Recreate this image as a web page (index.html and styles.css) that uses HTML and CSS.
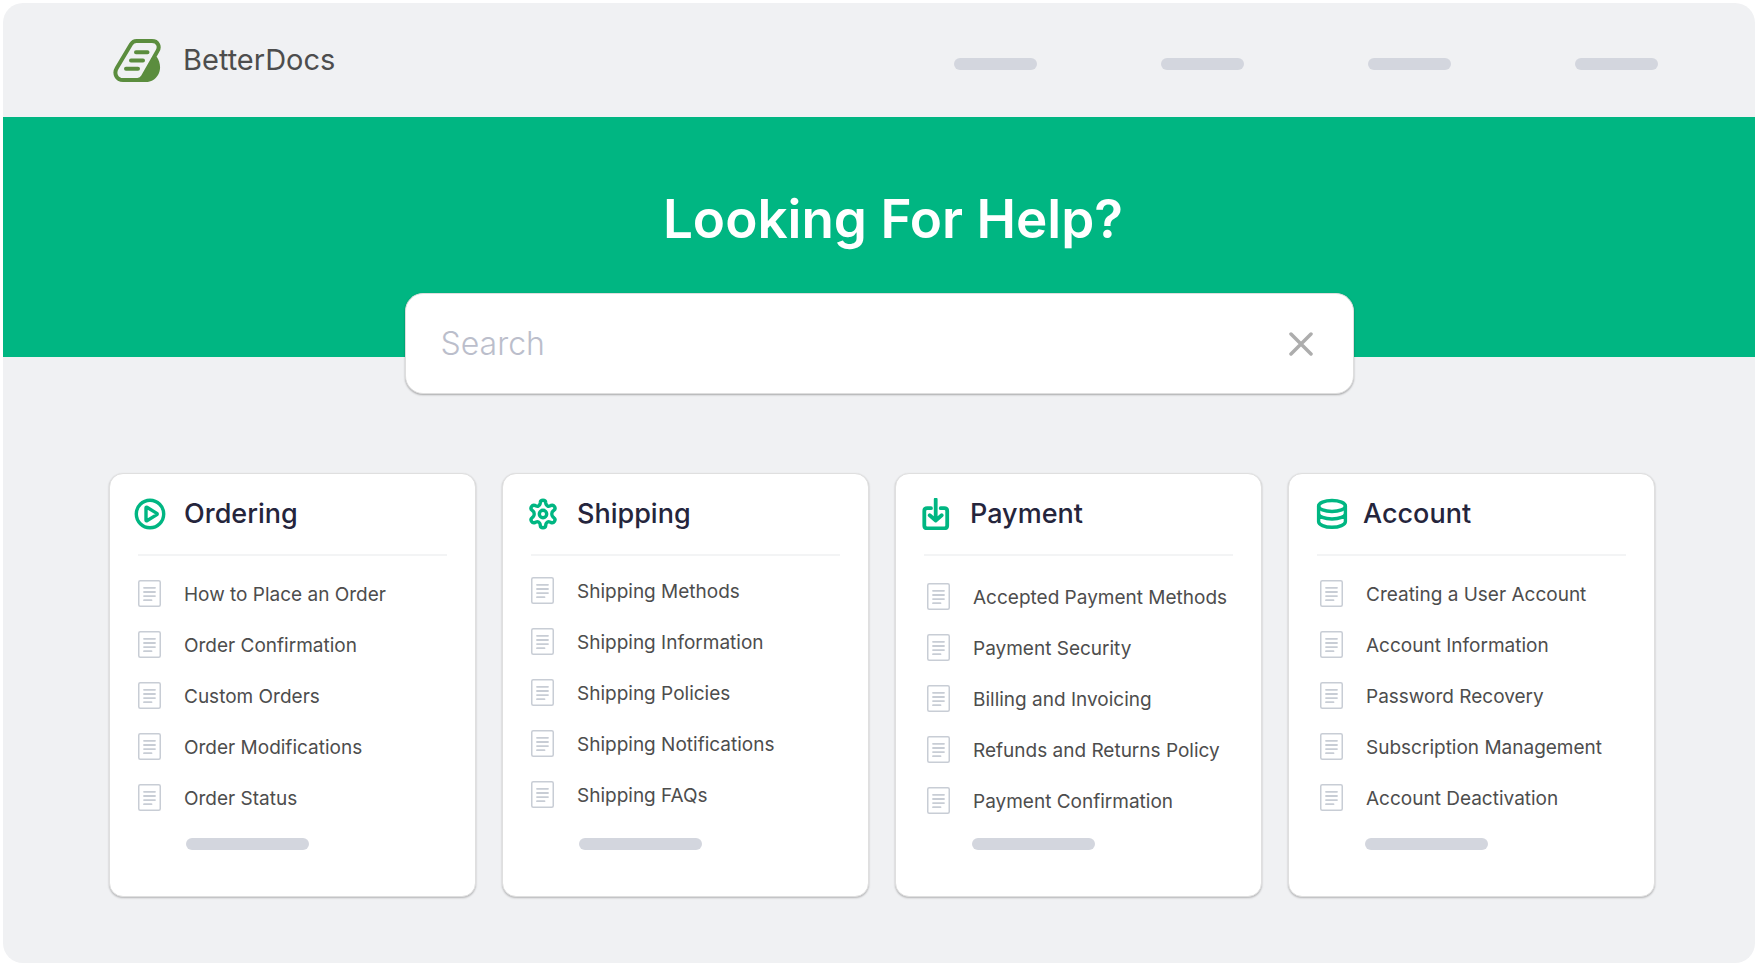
FILE: index.html
```html
<!DOCTYPE html>
<html lang="en">
<head>
<meta charset="utf-8">
<meta name="viewport" content="width=device-width, initial-scale=1">
<title>BetterDocs</title>
<link rel="stylesheet" href="styles.css">
</head>
<body>
<svg class="sprite" aria-hidden="true">
  <symbol id="doc" viewBox="0 0 23 27">
    <rect x=".75" y=".75" width="21.5" height="25.5" rx="1.5" fill="none" stroke="#c8cdd5" stroke-width="1.5"/>
    <path d="M6 7.8h11M6 12h11M6 16.1h11M6 20.2h7.5" fill="none" stroke="#c8cdd5" stroke-width="1.8" stroke-linecap="round"/>
  </symbol>
</svg>
<div class="page">
  <header class="header">
    <a class="brand" href="#">
      <svg class="brand-logo" viewBox="0 0 48 43" aria-hidden="true">
        <path d="M23.5 2H39c6 0 8.200 5.500 5.500 10L30 37.500c-1.200 2.200-2.800 3.500-5.500 3.500H10C3.500 41 .5 34.500 3.800 29L18 5.300C19.300 3.200 21 2 23.500 2Z" fill="none" stroke="#5b8d3e" stroke-width="4"/>
        <path d="M43.500 17.500c4.200 5.800 4.700 13 1.500 18.500-2.700 4.600-7 7-12 7H22c4 0 5.500-2.500 6.500-4.200Z" fill="#5b8d3e"/>
        <path d="M23 13.300h11.500M18 21.500h12M13 29.700h12" fill="none" stroke="#5b8d3e" stroke-width="4" stroke-linecap="round"/>
      </svg>
      <span>BetterDocs</span>
    </a>
    <nav class="nav" aria-label="Main">
      <a class="bar nav-bar" href="#" aria-label="Menu 1"></a>
      <a class="bar nav-bar" href="#" aria-label="Menu 2"></a>
      <a class="bar nav-bar" href="#" aria-label="Menu 3"></a>
      <a class="bar nav-bar" href="#" aria-label="Menu 4"></a>
    </nav>
  </header>

  <section class="banner">
    <h1 class="banner-title">Looking For Help?</h1>
    <form class="search" role="search">
      <input class="search-input" type="text" placeholder="Search" aria-label="Search">
      <button class="search-clear" type="button" aria-label="Clear">
        <svg width="24" height="24" viewBox="0 0 24 24" aria-hidden="true"><path d="M2 2l20 20M22 2L2 22" stroke="#adadad" stroke-width="3.500" stroke-linecap="round"/></svg>
      </button>
    </form>
  </section>

  <main class="cards">
    <section class="card">
      <h2 class="card-title">
        <svg class="card-icon" viewBox="0 0 32 32" aria-hidden="true"><circle cx="16" cy="16" r="13.700"/><path d="M12 9.800v12.400a.6.6 0 0 0 .9.500l10-6.100a.7.7 0 0 0 0-1.200l-10-6.100a.6.6 0 0 0-.9.500Z"/></svg>
        <span>Ordering</span>
      </h2>
      <ul class="list">
        <li><a class="item" href="#"><svg class="doc"><use href="#doc"/></svg>How to Place an Order</a></li>
        <li><a class="item" href="#"><svg class="doc"><use href="#doc"/></svg>Order Confirmation</a></li>
        <li><a class="item" href="#"><svg class="doc"><use href="#doc"/></svg>Custom Orders</a></li>
        <li><a class="item" href="#"><svg class="doc"><use href="#doc"/></svg>Order Modifications</a></li>
        <li><a class="item" href="#"><svg class="doc"><use href="#doc"/></svg>Order Status</a></li>
      </ul>
      <div class="bar more-bar"></div>
    </section>

    <section class="card">
      <h2 class="card-title">
        <svg class="card-icon" viewBox="0 0 32 32" aria-hidden="true"><circle cx="16" cy="16" r="3.700"/><path d="M13.300 4.500q.2-2.200 2.700-2.200t2.700 2.200l.2 1.400q.3 1.300 1.500 2 1.200.6 2.500.1l1.300-.6q2-.8 3.300 1.300t-.5 3.500l-1.100.9q-1.100.9-1.100 2.900t1.100 2.900l1.100.9q1.800 1.400.5 3.500t-3.300 1.300l-1.300-.6q-1.300-.5-2.500.1-1.200.7-1.500 2l-.2 1.400q-.2 2.200-2.700 2.200t-2.700-2.200l-.2-1.400q-.3-1.300-1.500-2-1.200-.6-2.500-.1l-1.300.6q-2 .8-3.300-1.300t.5-3.500l1.100-.9q1.100-.9 1.100-2.900t-1.100-2.900l-1.100-.9q-1.800-1.400-.5-3.500t3.300-1.300l1.300.6q1.300.5 2.500-.1 1.200-.7 1.500-2Z"/></svg>
        <span>Shipping</span>
      </h2>
      <ul class="list list-high">
        <li><a class="item" href="#"><svg class="doc"><use href="#doc"/></svg>Shipping Methods</a></li>
        <li><a class="item" href="#"><svg class="doc"><use href="#doc"/></svg>Shipping Information</a></li>
        <li><a class="item" href="#"><svg class="doc"><use href="#doc"/></svg>Shipping Policies</a></li>
        <li><a class="item" href="#"><svg class="doc"><use href="#doc"/></svg>Shipping Notifications</a></li>
        <li><a class="item" href="#"><svg class="doc"><use href="#doc"/></svg>Shipping FAQs</a></li>
      </ul>
      <div class="bar more-bar"></div>
    </section>

    <section class="card">
      <h2 class="card-title">
        <svg class="card-icon" viewBox="0 0 32 32" aria-hidden="true"><g stroke-width="3.800"><path d="M11 10.200H7.200Q4.300 10.200 4.300 13v14.500q0 2.800 2.900 2.800h17.100q2.900 0 2.900-2.800V13q0-2.800-2.900-2.800h-3.600"/><path d="M15.700 1.500v21M9.700 17.300l6 5.200 6-5.200"/></g></svg>
        <span>Payment</span>
      </h2>
      <ul class="list list-low list-inset">
        <li><a class="item" href="#"><svg class="doc"><use href="#doc"/></svg>Accepted Payment Methods</a></li>
        <li><a class="item" href="#"><svg class="doc"><use href="#doc"/></svg>Payment Security</a></li>
        <li><a class="item" href="#"><svg class="doc"><use href="#doc"/></svg>Billing and Invoicing</a></li>
        <li><a class="item" href="#"><svg class="doc"><use href="#doc"/></svg>Refunds and Returns Policy</a></li>
        <li><a class="item" href="#"><svg class="doc"><use href="#doc"/></svg>Payment Confirmation</a></li>
      </ul>
      <div class="bar more-bar"></div>
    </section>

    <section class="card">
      <h2 class="card-title card-title-tight">
        <svg class="card-icon" viewBox="0 0 32 32" aria-hidden="true"><ellipse cx="16" cy="8" rx="13.400" ry="5.500"/><path d="M2.600 8v15.500c0 3.200 6 5.800 13.400 5.800s13.400-2.600 13.400-5.800V8M2.600 15.500c0 3.200 6 5.500 13.400 5.500s13.400-2.300 13.400-5.500"/></svg>
        <span>Account</span>
      </h2>
      <ul class="list list-inset">
        <li><a class="item" href="#"><svg class="doc"><use href="#doc"/></svg>Creating a User Account</a></li>
        <li><a class="item" href="#"><svg class="doc"><use href="#doc"/></svg>Account Information</a></li>
        <li><a class="item" href="#"><svg class="doc"><use href="#doc"/></svg>Password Recovery</a></li>
        <li><a class="item" href="#"><svg class="doc"><use href="#doc"/></svg>Subscription Management</a></li>
        <li><a class="item" href="#"><svg class="doc"><use href="#doc"/></svg>Account Deactivation</a></li>
      </ul>
      <div class="bar more-bar"></div>
    </section>
  </main>
</div>
</body>
</html>
```

FILE: styles.css
```css
* {
  box-sizing: border-box;
}

body {
  margin: 0;
  padding: 3px;
  background: #fff;
  font-family: Inter, "Liberation Sans", sans-serif;
  color: #4d4d4d;
}

a {
  color: inherit;
  text-decoration: none;
}

.sprite {
  display: none;
}

.page {
  min-height: calc(100vh - 6px);
  border-radius: 20px;
  overflow: hidden;
  background: #f0f1f3;
}

.bar {
  display: block;
  height: 12px;
  border-radius: 6px;
  background: #d3d6de;
}

.header {
  display: flex;
  align-items: center;
  justify-content: space-between;
  height: 114px;
  padding: 0 97px 0 110px;
}

.brand {
  display: flex;
  align-items: center;
  gap: 22px;
  font-size: 29px;
  line-height: 36px;
}

.brand-logo {
  width: 48px;
  height: 43px;
}

.nav {
  display: flex;
  gap: 124px;
  padding-top: 8px;
}

.nav-bar {
  width: 83px;
}

.banner {
  display: flex;
  flex-direction: column;
  align-items: center;
  height: 240px;
  padding-top: 70px;
  background: #00b682;
}

.banner-title {
  margin: 0 0 42px;
  padding-left: 28px;
  font-size: 53px;
  font-weight: 600;
  line-height: 64px;
  color: #fff;
}

.search {
  display: flex;
  flex-shrink: 0;
  align-items: center;
  width: 949px;
  max-width: 90%;
  height: 101px;
  padding: 0 32px 0 35px;
  border: 1px solid #dedede;
  border-radius: 18px;
  background: #fff;
  box-shadow: 0 1px 2px rgba(0, 0, 0, 0.3);
}

.search-input {
  flex: 1;
  min-width: 0;
  padding: 0;
  border: 0;
  outline: 0;
  background: none;
  font: 300 32px/40px Inter, "Liberation Sans", sans-serif;
  color: #4d4d4d;
}

.search-input::placeholder {
  color: #bbbecb;
  opacity: 1;
}

.search-clear {
  display: flex;
  padding: 8px;
  border: 0;
  background: none;
  cursor: pointer;
}

.cards {
  display: grid;
  grid-template-columns: repeat(4, 1fr);
  gap: 26px;
  padding: 116px 100px 66px 106px;
}

.card {
  padding: 24px 28px 46px;
  border: 1px solid #dfdfdf;
  border-radius: 14px;
  background: #fff;
  box-shadow: 0 1px 2px rgba(0, 0, 0, 0.25);
}

.card-title {
  display: flex;
  align-items: center;
  gap: 18px;
  height: 58px;
  margin: 0;
  padding-bottom: 24px;
  border-bottom: 2px solid #f3f4f5;
  font-size: 27px;
  font-weight: 500;
  line-height: 32px;
  color: #25253c;
}

.card-icon {
  flex: none;
  width: 32px;
  height: 32px;
  margin-left: -4px;
  fill: none;
  stroke: #00b682;
  stroke-width: 3.4px;
  stroke-linecap: round;
  stroke-linejoin: round;
}

.card-title-tight {
  gap: 15px;
}

.card-title-tight .card-icon {
  margin-left: -1px;
}

.list {
  display: grid;
  gap: 21px;
  height: 282px;
  align-content: start;
  margin: 0;
  padding: 24px 0 0;
  list-style: none;
}

.list-high {
  padding-top: 21px;
}

.list-low {
  padding-top: 27px;
}

.list-inset {
  padding-left: 3px;
}

.item {
  display: flex;
  align-items: center;
  gap: 23px;
  font-size: 19px;
  line-height: 30px;
  white-space: nowrap;
}

.doc {
  flex: none;
  width: 23px;
  height: 27px;
  margin-bottom: 3px;
}

.more-bar {
  width: 123px;
  margin-left: 48px;
}
```
